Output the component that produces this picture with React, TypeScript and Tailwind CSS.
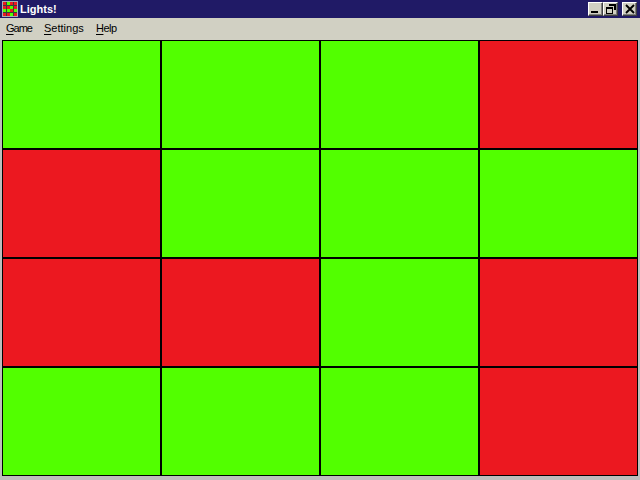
const lights = [
  1, 1, 1, 0,
  0, 1, 1, 1,
  0, 0, 1, 0,
  1, 1, 1, 0,
];

function AppIcon() {
  const on = [1, 6, 8, 9, 11, 14];
  return (
    <svg width="16" height="16" viewBox="0 0 16 16" shapeRendering="crispEdges">
      <rect width="16" height="16" fill="#a8acb4" />
      <rect x="1" y="1" width="14" height="14" fill="#3c3c3c" />
      {Array.from({ length: 16 }).map((_, i) => (
        <rect
          key={i}
          x={1 + (i % 4) * 3.5}
          y={1 + Math.floor(i / 4) * 3.5}
          width="3"
          height="3"
          fill={on.includes(i) ? '#52ff00' : '#ec1820'}
        />
      ))}
    </svg>
  );
}

function CaptionButton({ children, className }: { children: React.ReactNode; className?: string }) {
  return (
    <div
      className={`w-[15px] h-[14px] bg-[#d1d0c3] border border-t-white border-l-white border-r-[#404040] border-b-[#404040] shadow-[inset_-1px_-1px_0_#808080] flex items-center justify-center ${className ?? ''}`}
    >
      {children}
    </div>
  );
}

function MenuItem({ letter, rest, className }: { letter: string; rest: string; className?: string }) {
  return (
    <span className={className}>
      <span className="underline underline-offset-2">{letter}</span>
      {rest}
    </span>
  );
}

export default function App() {
  return (
    <div className="w-[640px] h-[480px] overflow-hidden bg-[#bdbdbd] font-['Liberation_Sans',sans-serif]">
      <div className="h-[18px] bg-[#201a66] flex items-center pl-[2px] pr-[3px]">
        <AppIcon />
        <span className="ml-[2px] text-[11px] font-bold text-white leading-none">Lights!</span>
        <div className="ml-auto flex">
          <CaptionButton>
            <svg width="11" height="10" viewBox="0 0 11 10" shapeRendering="crispEdges">
              <rect x="1" y="7" width="7" height="2" fill="#000" />
            </svg>
          </CaptionButton>
          <CaptionButton>
            <svg width="10" height="10" viewBox="0 0 10 10" shapeRendering="crispEdges">
              <path d="M3 0h7v6H8V2H3z M0 3h7v7H0z M1 5v4h5V5z" fill="#000" fillRule="evenodd" />
            </svg>
          </CaptionButton>
          <CaptionButton className="ml-[4px]">
            <svg width="10" height="10" viewBox="0 0 10 10">
              <path d="M1 1l8 8M9 1l-8 8" stroke="#000" strokeWidth="1.9" />
            </svg>
          </CaptionButton>
        </div>
      </div>
      <div className="h-[22px] bg-[#d1d0c3] flex items-center pl-[6px] text-[11px] text-black leading-none pb-[1px]">
        <MenuItem letter="G" rest="ame" className="w-[38px] tracking-[-1px]" />
        <MenuItem letter="S" rest="ettings" className="w-[52px]" />
        <MenuItem letter="H" rest="elp" className="tracking-[-0.5px]" />
      </div>
      <div className="pl-[2px] grid grid-cols-[repeat(4,159px)] auto-rows-[109px]">
        {lights.map((on, i) => (
          <div key={i} className={`border border-black ${on ? 'bg-[#52ff00]' : 'bg-[#ec1820]'}`} />
        ))}
      </div>
    </div>
  );
}
